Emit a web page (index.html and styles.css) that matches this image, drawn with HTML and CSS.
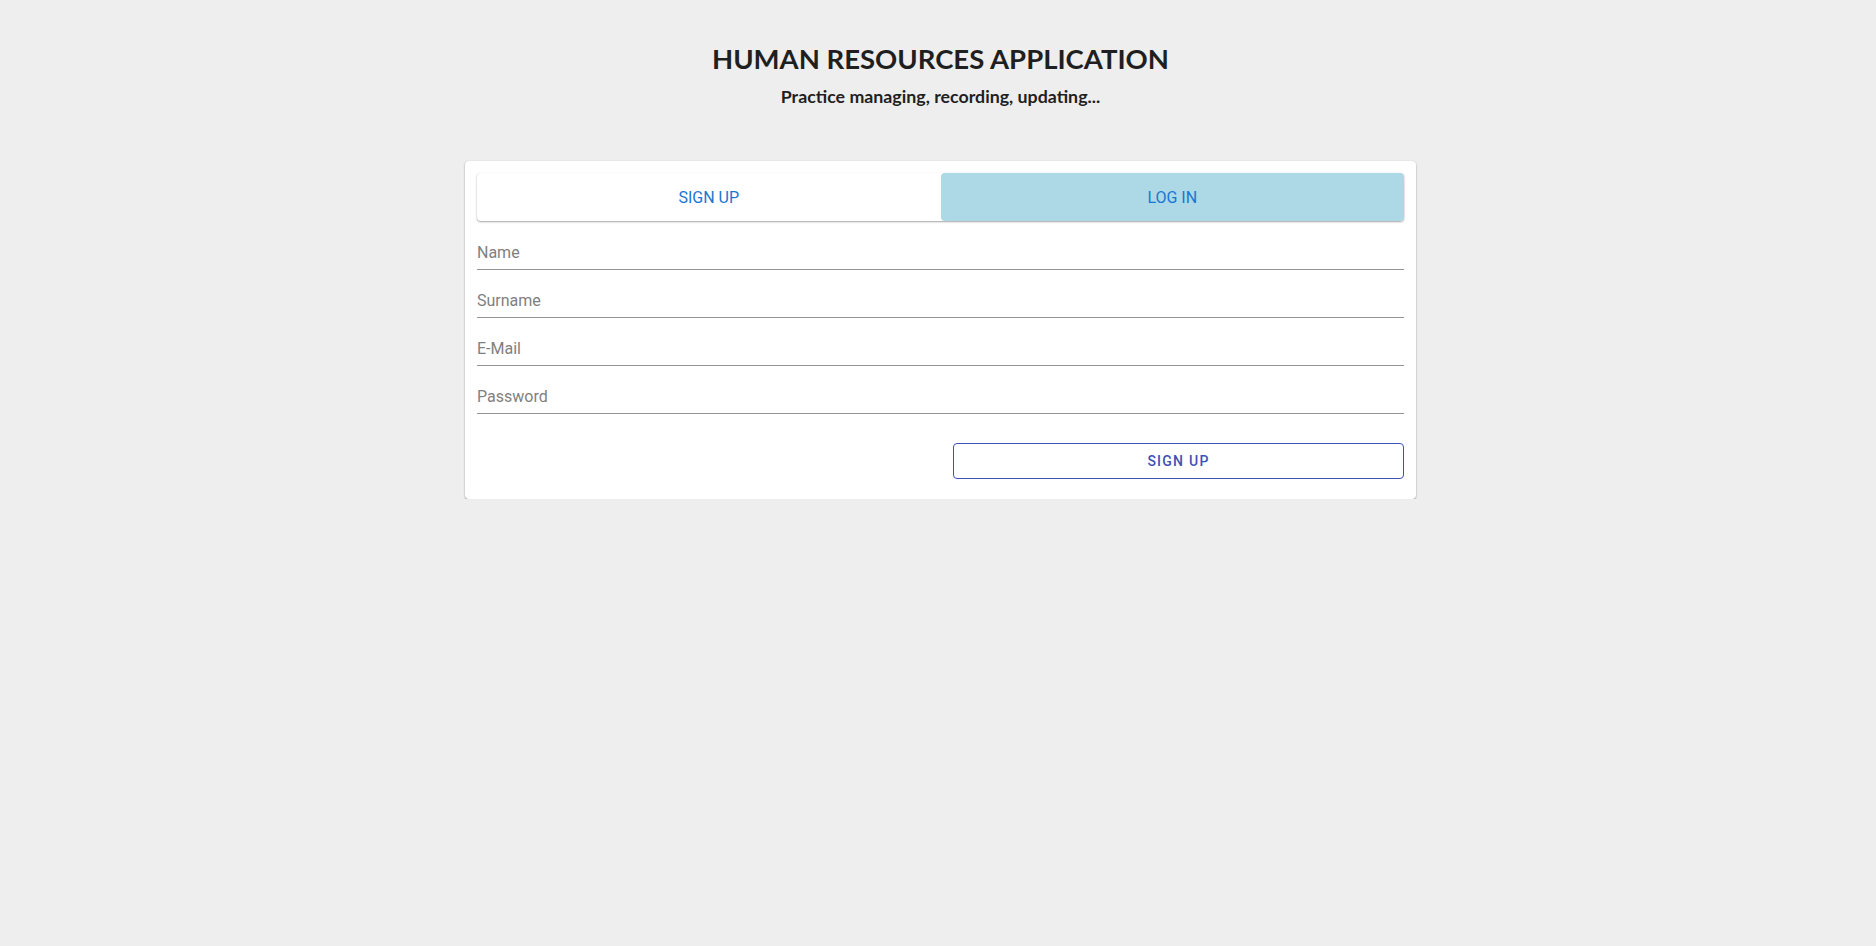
FILE: index.html
```html
<!DOCTYPE html>
<html lang="en">
<head>
<meta charset="utf-8">
<title>Human Resources Application</title>
<link rel="stylesheet" href="styles.css">
</head>
<body>
<div class="page">
  <header class="header">
    <h1 class="title">HUMAN RESOURCES APPLICATION</h1>
    <p class="subtitle">Practice managing, recording, updating...</p>
  </header>
  <main class="card">
    <div class="tabs">
      <div class="tab">SIGN UP</div>
      <div class="tab tab-active">LOG IN</div>
    </div>
    <form class="form">
      <label class="field"><span class="label">Name</span></label>
      <label class="field"><span class="label">Surname</span></label>
      <label class="field"><span class="label">E-Mail</span></label>
      <label class="field"><span class="label">Password</span></label>
      <div class="actions">
        <button type="button" class="btn">SIGN UP</button>
      </div>
    </form>
  </main>
</div>
</body>
</html>
```
FILE: styles.css
```css
html, body {
  margin: 0;
  padding: 0;
  background: #eeeeee;
  font-family: Roboto, "Liberation Sans", sans-serif;
}
.page {
  padding-left: 5px;
  display: flex;
  flex-direction: column;
  align-items: center;
}
.header {
  padding-top: 41px;
  text-align: center;
  color: #1f1f1f;
}
.title {
  margin: 0;
  font-family: Lato, "Open Sans", sans-serif;
  font-weight: 700;
  font-size: 27.5px;
  line-height: 36px;
}
.subtitle {
  margin: 7px 0 0;
  font-family: Lato, "Open Sans", sans-serif;
  font-weight: 700;
  font-size: 17.8px;
  line-height: 24px;
}
.card {
  margin-top: 53px;
  width: 951px;
  box-sizing: border-box;
  padding: 12px 12px 20px;
  background: #fff;
  border-radius: 4px;
  box-shadow: 0 1px 2px rgba(0,0,0,.35), 0 0 1px rgba(0,0,0,.12);
}
.tabs {
  display: grid;
  grid-template-columns: 1fr 1fr;
  height: 48px;
  margin-bottom: 1px;
  border-radius: 4px;
  box-shadow: 0 1px 2px rgba(0,0,0,.35), 0 0 1px rgba(0,0,0,.1);
}
.tab {
  display: flex;
  align-items: center;
  justify-content: center;
  font-size: 16px;
  color: #1976d2;
  border-radius: 4px;
}
.tab-active {
  background: #add8e6;
}
.form {
  display: flex;
  flex-direction: column;
}
.field {
  height: 48px;
  box-sizing: border-box;
  display: flex;
  align-items: flex-end;
  border-bottom: 1px solid #949494;
  padding-bottom: 6px;
}
.label {
  font-size: 16px;
  line-height: 20px;
  color: #7f7f7f;
}
.actions {
  margin-top: 29px;
  display: flex;
  justify-content: flex-end;
}
.btn {
  width: 451px;
  height: 36px;
  background: #fff;
  border: 1px solid #3f51b5;
  border-radius: 4px;
  color: #3f51b5;
  font-family: Roboto, sans-serif;
  font-weight: 500;
  font-size: 14px;
  letter-spacing: 1.25px;
  cursor: pointer;
}
```
